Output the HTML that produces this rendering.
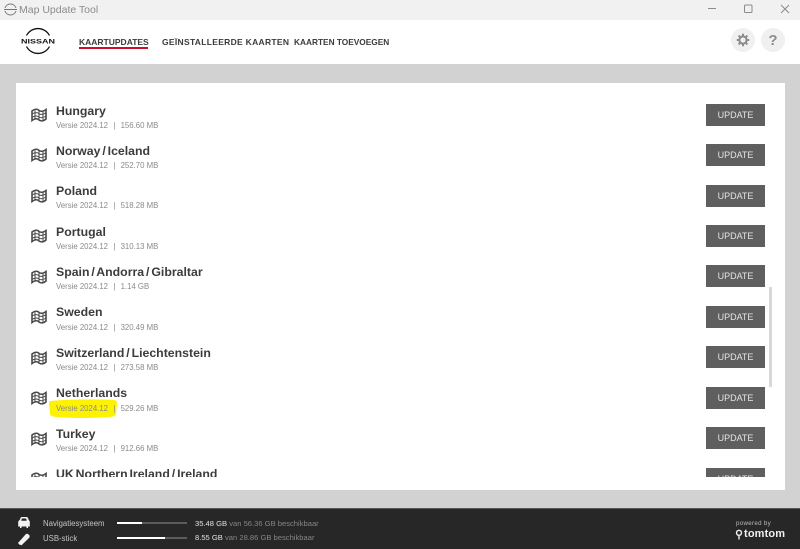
<!DOCTYPE html>
<html><head><meta charset="utf-8">
<style>
*{box-sizing:border-box}
html,body{margin:0;padding:0;width:800px;height:549px;overflow:hidden;background:#d2d2d2;font-family:"Liberation Sans",sans-serif}
.abs{position:absolute}
#title{left:0;top:0;width:800px;height:20px;background:#f1f1f1}
#head{left:0;top:20px;width:800px;height:44px;background:#fff}
.nav{position:absolute;top:37px;font-size:8.5px;font-weight:bold;color:#3b3b3b;white-space:nowrap;line-height:10px}
#panel{left:16px;top:83px;width:769px;height:407px;background:#fff}
#clip{left:16px;top:83px;width:769px;height:394px;overflow:hidden}
.name{position:absolute;left:40px;font-size:12.3px;font-weight:bold;color:#3c3c3c;word-spacing:-1.5px;white-space:nowrap;line-height:14px}
.sub{position:absolute;left:40px;font-size:7.8px;color:#8a8a8a;white-space:nowrap;line-height:10px;margin-top:1px}
.sub i{font-style:normal;margin:0 5px 0 5.5px}
.btn{position:absolute;left:690px;width:59px;height:22px;background:#5f5f5f;color:#e4e4e4;font-size:9px;text-align:center;line-height:22px}
.map{position:absolute;left:15px}
#foot{left:0;top:508px;width:800px;height:41px;background:#272727;border-top:1px solid #555}
.ft{position:absolute;font-size:7.6px;white-space:nowrap;color:#c8c8c8;line-height:10px}
.ft b{font-weight:normal;color:#e2e2e2}
.ft span{color:#858585}
.bar{position:absolute;left:117px;width:70px;height:2px;background:#5c5c5c}
.bar div{height:2px;background:#fff}
</style></head>
<body>
<div class="abs" id="title">
<svg class="abs" style="left:3px;top:2px" width="15" height="15" viewBox="0 0 15 15" fill="none" stroke="#777" stroke-width="1"><path d="M2 6A5.800 5.800 0 0 1 13 6M2 9A5.800 5.800 0 0 0 13 9M1 7.500H14"/></svg>
<div class="abs" style="left:19px;top:3px;font-size:10.5px;color:#8b8b8b;line-height:13px;white-space:nowrap;margin-top:.5px">Map Update Tool</div>
<svg class="abs" style="left:700px;top:0" width="100" height="20" fill="none" stroke="#8a8a8a" stroke-width="1"><path d="M8 8.500H16"/><rect x="44.500" y="5" width="7.500" height="7.500" rx="1"/><path d="M81 5L89 13M89 5L81 13"/></svg>
</div>
<div class="abs" id="head">
<svg class="abs" style="left:20px;top:6px" width="38" height="30" fill="none" stroke="#111" stroke-width="1.300"><path d="M6.500 9.500A13 13 0 0 1 29.500 9.500M6.500 20.500A13 13 0 0 0 29.500 20.500"/><text x="1" y="17.300" textLength="34" lengthAdjust="spacingAndGlyphs" font-family="Liberation Sans" font-size="6.500" font-weight="bold" fill="#111" stroke="none">NISSAN</text></svg>
<div class="abs" style="left:731px;top:8px;width:24px;height:24px;border-radius:50%;background:#f0f0f0"></div>
<div class="abs" style="left:761px;top:8px;width:24px;height:24px;border-radius:50%;background:#f0f0f0"></div>
<svg class="abs" style="left:736px;top:13px" width="14" height="14" fill="none" stroke="#8c8c8c"><circle cx="7" cy="7" r="3.600" stroke-width="2"/><path stroke-width="2" d="M7 .8V3M7 11V13.200M.8 7H3M11 7H13.200M2.600 2.600L4.200 4.200M9.800 9.800L11.400 11.400M11.400 2.600L9.800 4.200M4.200 9.800L2.600 11.400"/></svg>
<div class="abs" style="left:761px;top:12px;width:24px;text-align:center;font-size:15px;font-weight:bold;color:#8c8c8c;line-height:17px">?</div>
</div>
<div class="nav" style="left:79px">KAARTUPDATES</div>
<div class="abs" style="left:79px;top:47px;width:69px;height:2px;background:#c8102e"></div>
<div class="nav" style="left:162px;letter-spacing:.3px">GEÏNSTALLEERDE KAARTEN</div>
<div class="nav" style="left:294px;font-size:8.300px">KAARTEN TOEVOEGEN</div>

<div class="abs" id="panel"></div>
<svg class="abs" style="left:48px;top:398px" width="70" height="21"><path d="M3 3C20 1 50 1 66 2Q69 2 69 5L68 16Q68 18 65 18.500C50 20.500 20 20.500 5 18.500Q2 18 2 15L1 5Q1 3 3 3Z" fill="#fdf200"/></svg>
<div class="abs" id="clip">
<svg width="0" height="0" style="position:absolute"><defs><g id="m" fill="none" stroke="#4a4a4a"><path stroke-width="1.600" d="M1 3C4 .5 7 1 8 2.500C10 4 13 3 15 1.500V11C13 13 10 13.500 8 12C7 10.500 4 10 1 12.500Z"/><path stroke-width="1" d="M4 2.500V11M8 3V12M12 3V12M1 6C4 4 7 4.500 8 5.800C10 7 13 6 15 4.800M1 9.300C4 7.300 7 7.800 8 9C10 10.300 13 9.300 15 8"/></g></defs></svg>

<svg class="map" style="top:25px" width="16" height="14"><use href="#m"/></svg>
<div class="name" style="top:21px">Hungary</div>
<div class="sub" style="top:37px">Versie 2024.12<i>|</i>156.60 MB</div>
<div class="btn" style="top:21px">UPDATE</div>

<svg class="map" style="top:65.400px" width="16" height="14"><use href="#m"/></svg>
<div class="name" style="top:61px">Norway / Iceland</div>
<div class="sub" style="top:77px">Versie 2024.12<i>|</i>252.70 MB</div>
<div class="btn" style="top:61px">UPDATE</div>

<svg class="map" style="top:106px" width="16" height="14"><use href="#m"/></svg>
<div class="name" style="top:101px">Poland</div>
<div class="sub" style="top:117px">Versie 2024.12<i>|</i>518.28 MB</div>
<div class="btn" style="top:102px">UPDATE</div>

<svg class="map" style="top:146px" width="16" height="14"><use href="#m"/></svg>
<div class="name" style="top:142px">Portugal</div>
<div class="sub" style="top:158px">Versie 2024.12<i>|</i>310.13 MB</div>
<div class="btn" style="top:142px">UPDATE</div>

<svg class="map" style="top:187px" width="16" height="14"><use href="#m"/></svg>
<div class="name" style="top:182px">Spain / Andorra / Gibraltar</div>
<div class="sub" style="top:198px">Versie 2024.12<i>|</i>1.14 GB</div>
<div class="btn" style="top:182px">UPDATE</div>

<svg class="map" style="top:227px" width="16" height="14"><use href="#m"/></svg>
<div class="name" style="top:222px">Sweden</div>
<div class="sub" style="top:239px">Versie 2024.12<i>|</i>320.49 MB</div>
<div class="btn" style="top:223px">UPDATE</div>

<svg class="map" style="top:268px" width="16" height="14"><use href="#m"/></svg>
<div class="name" style="top:263px">Switzerland / Liechtenstein</div>
<div class="sub" style="top:279px">Versie 2024.12<i>|</i>273.58 MB</div>
<div class="btn" style="top:263px">UPDATE</div>

<svg class="map" style="top:308px" width="16" height="14"><use href="#m"/></svg>
<div class="name" style="top:303px">Netherlands</div>
<div class="sub" style="top:320px">Versie 2024.12<i>|</i>529.26 MB</div>
<div class="btn" style="top:304px">UPDATE</div>

<svg class="map" style="top:349px" width="16" height="14"><use href="#m"/></svg>
<div class="name" style="top:344px">Turkey</div>
<div class="sub" style="top:360px">Versie 2024.12<i>|</i>912.66 MB</div>
<div class="btn" style="top:344px">UPDATE</div>

<svg class="map" style="top:389px" width="16" height="14"><use href="#m"/></svg>
<div class="name" style="top:384px">UK Northern Ireland / Ireland</div>
<div class="btn" style="top:385px">UPDATE</div>
</div>
<div class="abs" style="left:769px;top:287px;width:2.500px;height:100px;background:#d8d8d8"></div>

<div class="abs" id="foot"></div>
<svg class="abs" style="left:17px;top:516px" width="14" height="30" fill="#f2f2f2"><path d="M3 3.500Q3.400 1 5 1H9.500Q11 1 11.500 3.500L12.800 5.500V10.500H11V12H9.500V10.500H4.500V12H3V10.500H1.200V5.500ZM4.300 4.800H9.700L9.200 2.500H4.800Z"/><path d="M2.200 28.500L1 27L8.500 18.500Q10 17.200 11.300 18.300L12.300 19.300Q13.200 20.500 12 22L4.500 29.300Z"/></svg>
<div class="ft" style="left:43px;top:519px;color:#c4c4c4;font-size:7.800px">Navigatiesysteem</div>
<div class="ft" style="left:43px;top:534px;color:#c4c4c4;font-size:7.800px">USB-stick</div>
<div class="bar" style="top:522px"><div style="width:25px"></div></div>
<div class="bar" style="top:537px"><div style="width:48px"></div></div>
<div class="ft" style="left:195px;top:518.500px"><b>35.48 GB</b> <span>van 56.36 GB beschikbaar</span></div>
<div class="ft" style="left:195px;top:533px"><b>8.55 GB</b> <span>van 28.86 GB beschikbaar</span></div>
<div class="abs" style="left:736px;top:520px;font-size:6.200px;color:#bbb;letter-spacing:.3px;line-height:8px;white-space:nowrap">powered by</div>
<svg class="abs" style="left:735px;top:529px" width="8" height="11" fill="none" stroke="#f0f0f0" stroke-width="1.400"><circle cx="4" cy="3.800" r="2.500"/><path d="M4 7V10.500"/></svg>
<div class="abs" style="left:744px;top:528px;font-size:11px;font-weight:bold;color:#f0f0f0;letter-spacing:.15px;line-height:13px;white-space:nowrap">tomtom</div>
</body></html>
